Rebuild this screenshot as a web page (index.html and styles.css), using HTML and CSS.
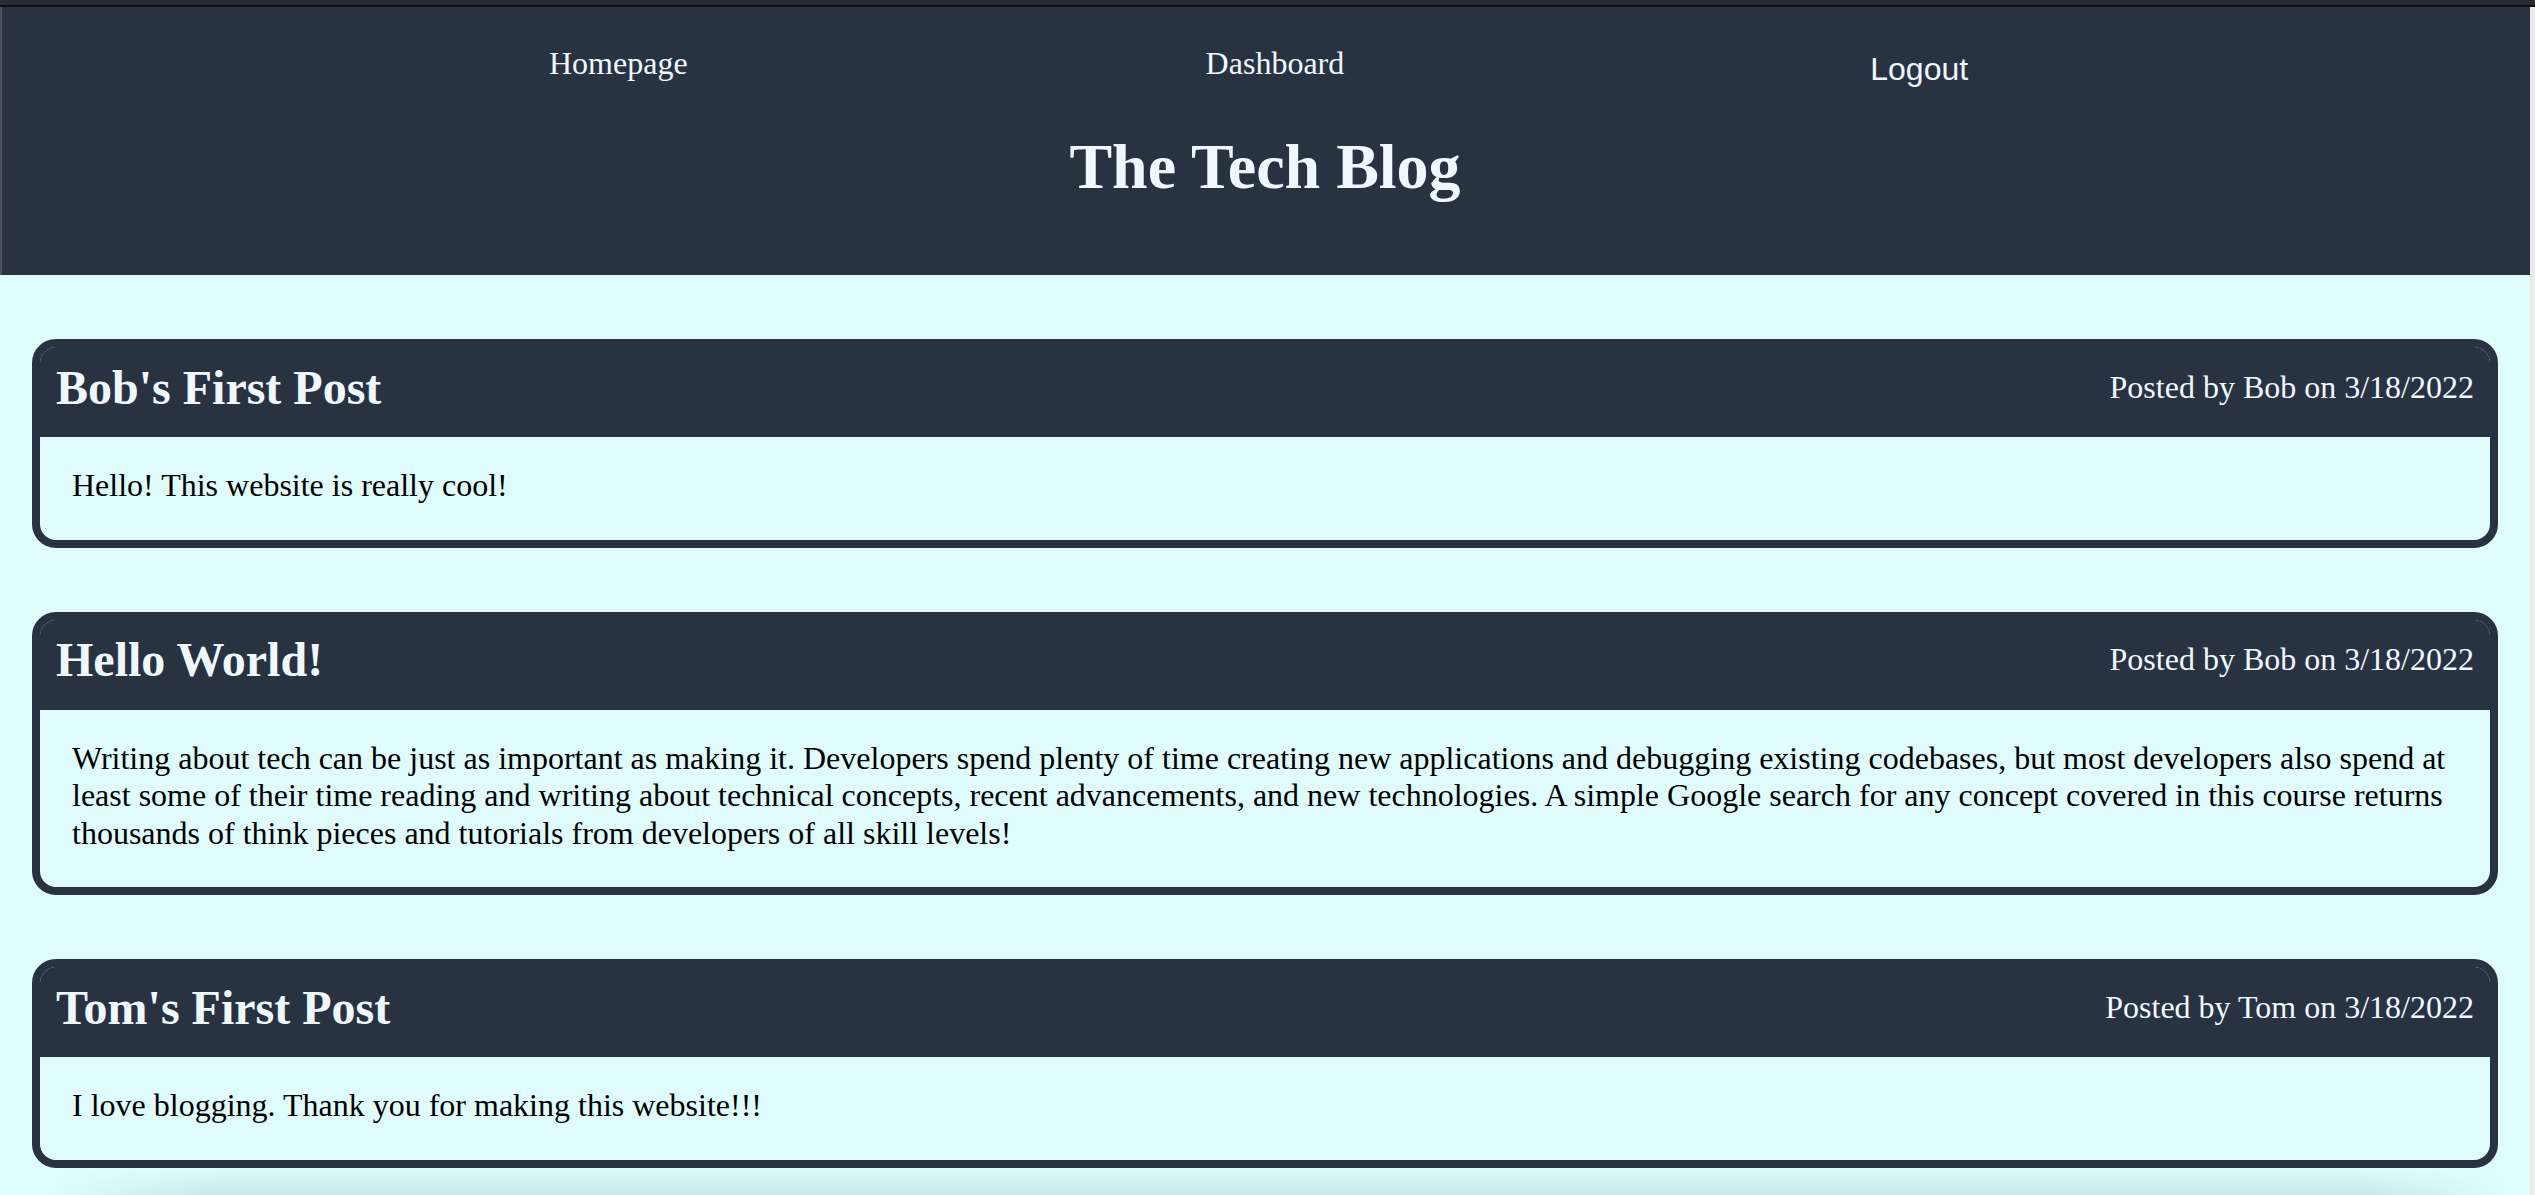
FILE: index.html
```html
<!DOCTYPE html>
<html lang="en">
<head>
<meta charset="utf-8">
<title>The Tech Blog</title>
<link rel="stylesheet" href="styles.css">
</head>
<body>
<div class="chrome"></div>
<div class="page">
  <header class="site-header">
    <nav class="nav">
      <a class="nav-link" href="#">Homepage</a>
      <a class="nav-link" href="#">Dashboard</a>
      <button class="nav-btn" type="button">Logout</button>
    </nav>
    <h1 class="site-title">The Tech Blog</h1>
  </header>
  <main class="posts">
    <article class="post">
      <div class="post-head">
        <h2 class="post-title">Bob's First Post</h2>
        <p class="post-meta">Posted by Bob on 3/18/2022</p>
      </div>
      <div class="post-body">
        <p>Hello! This website is really cool!</p>
      </div>
    </article>
    <article class="post">
      <div class="post-head">
        <h2 class="post-title">Hello World!</h2>
        <p class="post-meta">Posted by Bob on 3/18/2022</p>
      </div>
      <div class="post-body">
        <p>Writing about tech can be just as important as making it. Developers spend plenty of time creating new applications and debugging existing codebases, but most developers also spend at least some of their time reading and writing about technical concepts, recent advancements, and new technologies. A simple Google search for any concept covered in this course returns thousands of think pieces and tutorials from developers of all skill levels!</p>
      </div>
    </article>
    <article class="post">
      <div class="post-head">
        <h2 class="post-title">Tom's First Post</h2>
        <p class="post-meta">Posted by Tom on 3/18/2022</p>
      </div>
      <div class="post-body">
        <p>I love blogging. Thank you for making this website!!!</p>
      </div>
    </article>
    <div class="shade"></div>
  </main>
</div>
</body>
</html>
```

FILE: styles.css
```css
html, body {
  margin: 0;
  padding: 0;
}

body {
  background: #ebebeb;
  font-family: "Liberation Serif", "Times New Roman", serif;
  font-size: 32px;
  color: #000;
  overflow: hidden;
}

.chrome {
  height: 5px;
  background: #2b2a33;
  border-bottom: 2px solid #101013;
}

.page {
  margin-right: 5px;
  background: #e0fbfc;
  min-height: calc(100vh - 7px);
}

.site-header {
  background: #293241;
  box-shadow: inset 2px 0 0 #4b5059;
  padding: 38px 0 71px;
}

.nav {
  display: flex;
  align-items: flex-start;
  padding-left: 549px;
}

.nav-link {
  color: #f0f8ff;
  text-decoration: none;
  font-size: 32px;
  line-height: normal;
}

.nav-link + .nav-link {
  margin-left: 518px;
}

.nav-btn {
  font-family: "Liberation Sans", Arial, sans-serif;
  font-size: 32px;
  color: #f0f8ff;
  background: none;
  border: none;
  padding: 6px 0 0;
  margin: 0 0 0 526px;
  line-height: normal;
}

.site-title {
  margin: 42px 0 0;
  text-align: center;
  font-size: 64px;
  font-weight: bold;
  color: #f0f8ff;
  line-height: normal;
}

.posts {
  padding: 64px 32px 0;
  display: flex;
  flex-direction: column;
  gap: 64px;
}

.post {
  border: 8px solid #293241;
  border-radius: 24px;
  overflow: hidden;
  background: #e0fbfc;
}

.post-head {
  background: #293241;
  height: 80px;
  padding: 0 16px 10px;
  display: flex;
  align-items: center;
  justify-content: space-between;
  color: #f0f8ff;
}

.post-title {
  margin: 0;
  font-size: 48px;
  font-weight: bold;
}

.post-meta {
  margin: 0;
  font-size: 32px;
}

.post-body {
  padding: 30px 32px 35px;
}

.post-body p {
  margin: 0;
  line-height: 37.6px;
}

.shade {
  height: 28px;
  margin: -64px -32px 0;
  background: linear-gradient(to bottom, rgba(0, 60, 66, 0), rgba(0, 60, 66, 0.11));
  -webkit-mask-image: linear-gradient(to right, transparent 2%, #000 9%, #000 93%, transparent 99%);
  mask-image: linear-gradient(to right, transparent 2%, #000 9%, #000 93%, transparent 99%);
}
```
